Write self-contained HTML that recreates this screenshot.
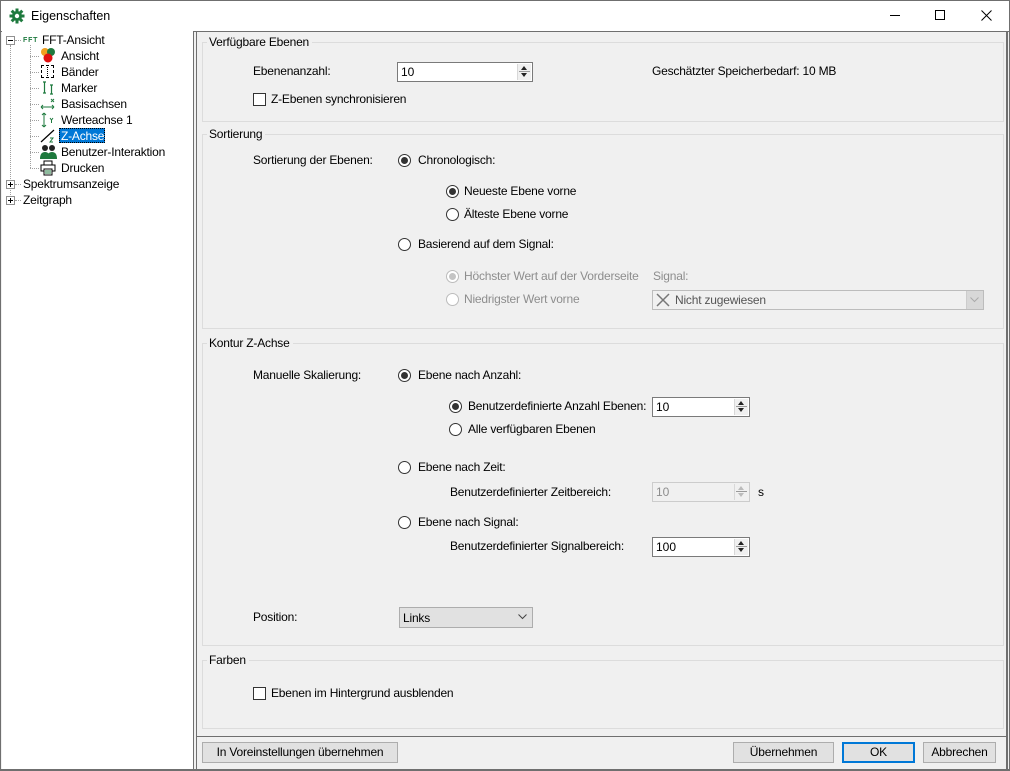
<!DOCTYPE html>
<html><head><meta charset="utf-8"><style>
*{box-sizing:border-box;margin:0;padding:0}
body{width:1010px;height:771px;background:#f0f0f0;font-family:"Liberation Sans",sans-serif;font-size:12px;color:#000;position:relative;overflow:hidden}
.a{position:absolute;white-space:nowrap;line-height:14px}
.t{position:absolute;white-space:nowrap;line-height:14px;letter-spacing:-0.2px}
.g{position:absolute;border:1px solid #dcdcdc}
.gt{position:absolute;background:#f0f0f0;padding:0 3px 0 2px;line-height:14px;white-space:nowrap;letter-spacing:-0.2px}
.r{position:absolute;width:13px;height:13px;border:1px solid #333;border-radius:50%;background:#fff}
.r.on::after{content:"";position:absolute;left:2px;top:2px;width:7px;height:7px;border-radius:50%;background:#333}
.r.dis{border-color:#bcbcbc;background:#fff}
.r.dis.on::after{background:#c4c4c4}
.cb{position:absolute;width:13px;height:13px;border:1px solid #333;background:#fff}
.sp{position:absolute;border:1px solid #7a7a7a;background:#fff;height:20px}
.sp span{position:absolute;left:3px;top:2px;line-height:14px}
.sp i{position:absolute;right:1px;top:1px;width:14px;height:16px;border-left:1px solid #d8d8d8;background:#f0f0f0}
.sp i::before{content:"";position:absolute;left:3px;top:2px;border:3px solid transparent;border-bottom:4px solid #222;border-top:0}
.sp i::after{content:"";position:absolute;left:3px;top:9px;border:3px solid transparent;border-top:4px solid #222;border-bottom:0}
.sp i b{position:absolute;left:1px;right:1px;top:7px;height:1px;background:#999}
.sp.dis{border-color:#ccc;background:#f0f0f0;color:#8d8d8d}
.sp.dis i::before{border-bottom-color:#bbb}.sp.dis i::after{border-top-color:#bbb}
.btn{position:absolute;height:21px;border:1px solid #adadad;background:#e1e1e1;text-align:center;line-height:19px;letter-spacing:-0.2px}
.dis{color:#8d8d8d}
.dot{position:absolute;border-color:#a0a0a0;border-style:dotted;border-width:0}
</style></head><body>
<div style="position:absolute;left:0;top:0;width:1010px;height:31px;background:#fff;border:1px solid #6f6f6f;border-bottom:none"></div>
<svg style="position:absolute;left:9px;top:8px" width="16" height="16" viewBox="0 0 16 16"><g fill="#1e7a3e"><circle cx="8" cy="8" r="5"/><rect x="6.5" y="0.5" width="3" height="15"/><rect x="0.5" y="6.5" width="15" height="3"/><rect x="6.5" y="0.5" width="3" height="15" transform="rotate(45 8 8)"/><rect x="6.5" y="0.5" width="3" height="15" transform="rotate(-45 8 8)"/></g><circle cx="8" cy="8" r="2.2" fill="#fff"/></svg>
<div class="a" style="left:31px;top:9px;font-size:12.5px">Eigenschaften</div>
<div style="position:absolute;left:890px;top:15px;width:10px;height:1px;background:#000"></div>
<div style="position:absolute;left:935px;top:10px;width:10px;height:10px;border:1px solid #000"></div>
<svg style="position:absolute;left:981px;top:10px" width="11" height="11"><path d="M0.5 0.5L10.5 10.5M10.5 0.5L0.5 10.5" stroke="#000" stroke-width="1"/></svg>
<div style="position:absolute;left:0;top:31px;width:1010px;height:740px;border:1px solid #6f6f6f"></div>
<div style="position:absolute;left:0;top:769px;width:1010px;height:2px;background:#6f6f6f"></div>
<div style="position:absolute;left:2px;top:31px;width:192px;height:738px;background:#fff;border-right:1px solid #6f6f6f"></div>
<div style="position:absolute;left:196px;top:31px;width:1px;height:738px;background:#6f6f6f"></div>
<div style="position:absolute;left:1006px;top:31px;width:2px;height:738px;background:#6f6f6f"></div>
<div class="dot" style="left:10px;top:45px;height:152px;border-left-width:1px"></div>
<div class="dot" style="left:30px;top:45px;height:123px;border-left-width:1px"></div>
<div class="dot" style="left:15px;top:40px;width:6px;border-top-width:1px"></div>
<div class="dot" style="left:30px;top:56px;width:9px;border-top-width:1px"></div>
<div class="dot" style="left:30px;top:72px;width:9px;border-top-width:1px"></div>
<div class="dot" style="left:30px;top:88px;width:9px;border-top-width:1px"></div>
<div class="dot" style="left:30px;top:104px;width:9px;border-top-width:1px"></div>
<div class="dot" style="left:30px;top:120px;width:9px;border-top-width:1px"></div>
<div class="dot" style="left:30px;top:136px;width:9px;border-top-width:1px"></div>
<div class="dot" style="left:30px;top:152px;width:9px;border-top-width:1px"></div>
<div class="dot" style="left:30px;top:168px;width:9px;border-top-width:1px"></div>
<div class="dot" style="left:15px;top:184px;width:6px;border-top-width:1px"></div>
<div class="dot" style="left:15px;top:200px;width:6px;border-top-width:1px"></div>
<div style="position:absolute;left:6px;top:36px;width:9px;height:9px;border:1px solid #919191;background:#fff"><div style="position:absolute;left:1px;top:3px;width:5px;height:1px;background:#000"></div></div>
<div style="position:absolute;left:6px;top:180px;width:9px;height:9px;border:1px solid #919191;background:#fff"><div style="position:absolute;left:1px;top:3px;width:5px;height:1px;background:#000"></div><div style="position:absolute;left:3px;top:1px;width:1px;height:5px;background:#000"></div></div>
<div style="position:absolute;left:6px;top:196px;width:9px;height:9px;border:1px solid #919191;background:#fff"><div style="position:absolute;left:1px;top:3px;width:5px;height:1px;background:#000"></div><div style="position:absolute;left:3px;top:1px;width:1px;height:5px;background:#000"></div></div>
<div class="a" style="left:23px;top:37px;font-size:7px;font-weight:bold;color:#1e7a3e;letter-spacing:0.8px;line-height:8px">FFT</div>
<div class="t" style="left:42px;top:33px">FFT-Ansicht</div>
<svg style="position:absolute;left:40px;top:47px" width="16" height="16"><circle cx="5" cy="5" r="4" fill="#f0a020"/><circle cx="11" cy="5" r="4" fill="#1e7a3e"/><circle cx="8" cy="11" r="4.5" fill="#e01010"/></svg>
<div class="t" style="left:61px;top:49px">Ansicht</div>
<div style="position:absolute;left:41px;top:65px;width:13px;height:13px;border:1px dashed #000"></div><div style="position:absolute;left:47px;top:67px;width:1px;height:9px;border-left:1px dotted #000"></div>
<div class="t" style="left:61px;top:65px">Bänder</div>
<svg style="position:absolute;left:40px;top:80px" width="16" height="16"><path d="M3 2h3M4.5 2v11M3 13h3M10 5h3M11.5 5v9M10 14h3" stroke="#1e7a3e" stroke-width="1.2" fill="none"/></svg>
<div class="t" style="left:61px;top:81px">Marker</div>
<svg style="position:absolute;left:40px;top:96px" width="16" height="16"><path d="M1 11h13M1 11l2-2M1 11l2 2M14 11l-2-2M14 11l-2 2" stroke="#1e7a3e" fill="none"/><path d="M11 3l3 3M14 3l-3 3" stroke="#1e7a3e"/></svg>
<div class="t" style="left:61px;top:97px">Basisachsen</div>
<svg style="position:absolute;left:40px;top:112px" width="16" height="16"><path d="M4 1v14M4 1l-2 2M4 1l2 2M4 15l-2-2M4 15l2-2" stroke="#1e7a3e" fill="none"/><path d="M10 6l1.5 2 1.5-2M11.5 8v3" stroke="#1e7a3e" fill="none"/></svg>
<div class="t" style="left:61px;top:113px">Werteachse 1</div>
<svg style="position:absolute;left:40px;top:128px" width="16" height="16"><path d="M1 14L14 2" stroke="#000" stroke-width="1.2"/><path d="M10 10h3l-3 4h3" stroke="#1e7a3e" fill="none"/></svg>
<div style="position:absolute;left:59px;top:128px;width:46px;height:15px;background:#0078d7;border:1px dotted #000"></div>
<div class="t" style="left:61px;top:129px;color:#fff">Z-Achse</div>
<svg style="position:absolute;left:40px;top:144px" width="17" height="16"><circle cx="5" cy="4" r="3" fill="#222"/><circle cx="12" cy="4" r="3" fill="#222"/><path d="M0 15q0-7 5-7q5 0 5 7z" fill="#1e7a3e"/><path d="M7 15q0-7 5-7q5 0 5 7z" fill="#1e7a3e"/></svg>
<div class="t" style="left:61px;top:145px">Benutzer-Interaktion</div>
<svg style="position:absolute;left:40px;top:160px" width="16" height="16"><rect x="4" y="1" width="8" height="4" fill="#fff" stroke="#000"/><rect x="1" y="5" width="14" height="6" fill="#fff" stroke="#000"/><rect x="4" y="9" width="8" height="6" fill="#fff" stroke="#000"/><path d="M5 11h6M5 13h6" stroke="#1e7a3e"/></svg>
<div class="t" style="left:61px;top:161px">Drucken</div>
<div class="t" style="left:23px;top:177px">Spektrumsanzeige</div>
<div class="t" style="left:23px;top:193px">Zeitgraph</div>

<div class="g" style="left:202px;top:42px;width:802px;height:80px"></div><div class="gt" style="left:207px;top:35px">Verfügbare Ebenen</div>
<div class="g" style="left:202px;top:134px;width:802px;height:195px"></div><div class="gt" style="left:207px;top:127px">Sortierung</div>
<div class="g" style="left:202px;top:343px;width:802px;height:303px"></div><div class="gt" style="left:207px;top:336px">Kontur Z-Achse</div>
<div class="g" style="left:202px;top:660px;width:802px;height:69px"></div><div class="gt" style="left:207px;top:653px">Farben</div>

<div class="t" style="left:253px;top:64px">Ebenenanzahl:</div>
<div class="sp" style="left:397px;top:62px;width:136px"><span>10</span><i><b></b></i></div>
<div class="t" style="left:652px;top:64px">Geschätzter Speicherbedarf: 10 MB</div>
<div class="cb" style="left:253px;top:93px"></div><div class="t" style="left:271px;top:92px">Z-Ebenen synchronisieren</div>

<div class="t" style="left:253px;top:153px">Sortierung der Ebenen:</div>
<div class="r on" style="left:398px;top:154px"></div><div class="t" style="left:418px;top:153px">Chronologisch:</div>
<div class="r on" style="left:446px;top:185px"></div><div class="t" style="left:464px;top:184px">Neueste Ebene vorne</div>
<div class="r" style="left:446px;top:208px"></div><div class="t" style="left:464px;top:207px">Älteste Ebene vorne</div>
<div class="r" style="left:398px;top:238px"></div><div class="t" style="left:418px;top:237px">Basierend auf dem Signal:</div>
<div class="r dis on" style="left:446px;top:270px"></div><div class="t dis" style="left:464px;top:269px">Höchster Wert auf der Vorderseite</div>
<div class="r dis" style="left:446px;top:293px"></div><div class="t dis" style="left:464px;top:292px">Niedrigster Wert vorne</div>
<div class="t dis" style="left:653px;top:269px">Signal:</div>
<div style="position:absolute;left:652px;top:290px;width:332px;height:20px;border:1px solid #bcbcbc;background:#f0f0f0"></div>
<svg style="position:absolute;left:656px;top:293px" width="14" height="14"><path d="M1 1L13 13M13 1L1 13" stroke="#777" stroke-width="1.5"/></svg>
<div class="t" style="left:675px;top:293px;color:#555">Nicht zugewiesen</div>
<div style="position:absolute;left:966px;top:291px;width:17px;height:18px;background:#d8d8d8;border-left:1px solid #ccc"></div>
<svg style="position:absolute;left:970px;top:297px" width="9" height="6"><path d="M0.5 0.5L4.5 4.5L8.5 0.5" stroke="#aaa" fill="none"/></svg>

<div class="t" style="left:253px;top:368px">Manuelle Skalierung:</div>
<div class="r on" style="left:398px;top:369px"></div><div class="t" style="left:418px;top:368px">Ebene nach Anzahl:</div>
<div class="r on" style="left:449px;top:400px"></div><div class="t" style="left:468px;top:399px">Benutzerdefinierte Anzahl Ebenen:</div>
<div class="sp" style="left:652px;top:397px;width:98px"><span>10</span><i><b></b></i></div>
<div class="r" style="left:449px;top:423px"></div><div class="t" style="left:468px;top:422px">Alle verfügbaren Ebenen</div>
<div class="r" style="left:398px;top:461px"></div><div class="t" style="left:418px;top:460px">Ebene nach Zeit:</div>
<div class="t" style="left:450px;top:485px">Benutzerdefinierter Zeitbereich:</div>
<div class="sp dis" style="left:652px;top:482px;width:98px"><span>10</span><i><b></b></i></div>
<div class="t" style="left:758px;top:485px">s</div>
<div class="r" style="left:398px;top:516px"></div><div class="t" style="left:418px;top:515px">Ebene nach Signal:</div>
<div class="t" style="left:450px;top:539px">Benutzerdefinierter Signalbereich:</div>
<div class="sp" style="left:652px;top:537px;width:98px"><span>100</span><i><b></b></i></div>
<div class="t" style="left:253px;top:610px">Position:</div>
<div style="position:absolute;left:399px;top:607px;width:134px;height:21px;border:1px solid #adadad;background:#e1e1e1"></div>
<div class="t" style="left:403px;top:611px">Links</div>
<svg style="position:absolute;left:518px;top:614px" width="9" height="6"><path d="M0.5 0.5L4.5 4.5L8.5 0.5" stroke="#444" fill="none"/></svg>
<div class="cb" style="left:253px;top:687px"></div><div class="t" style="left:271px;top:686px">Ebenen im Hintergrund ausblenden</div>

<div style="position:absolute;left:197px;top:736px;width:809px;height:1px;background:#6f6f6f"></div>
<div class="btn" style="left:202px;top:742px;width:196px">In Voreinstellungen übernehmen</div>
<div class="btn" style="left:733px;top:742px;width:101px">Übernehmen</div>
<div class="btn" style="left:842px;top:742px;width:73px;border:2px solid #0078d7;line-height:17px">OK</div>
<div class="btn" style="left:923px;top:742px;width:73px">Abbrechen</div>
</body></html>
